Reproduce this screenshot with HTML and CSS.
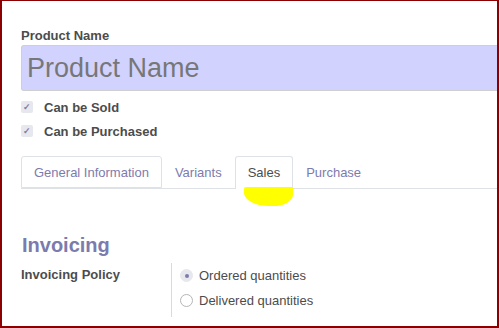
FILE: index.html
```html
<!DOCTYPE html>
<html lang="en">
<head>
    <meta charset="UTF-8">
    <title>Product - Sales</title>
    <link rel="stylesheet" href="styles.css">
</head>
<body>
    <div class="frame">
        <div class="product-form">
            <label class="field-label" for="productName">Product Name</label>
            <input class="name-input" id="productName" type="text" placeholder="Product Name">

            <div class="check-row">
                <span class="check-box">&#10003;</span>
                <span class="check-label">Can be Sold</span>
            </div>
            <div class="check-row">
                <span class="check-box">&#10003;</span>
                <span class="check-label">Can be Purchased</span>
            </div>

            <ul class="tabs">
                <li class="tab bordered">General Information</li>
                <li class="tab">Variants</li>
                <li class="tab active">Sales<span class="marker"></span></li>
                <li class="tab">Purchase</li>
            </ul>

            <h2 class="section-title">Invoicing</h2>

            <div class="field-row">
                <div class="row-label">Invoicing Policy</div>
                <div class="row-value">
                    <div class="radio-row">
                        <span class="radio checked"></span>
                        <span>Ordered quantities</span>
                    </div>
                    <div class="radio-row">
                        <span class="radio"></span>
                        <span>Delivered quantities</span>
                    </div>
                </div>
            </div>
        </div>
    </div>
</body>
</html>
```

FILE: styles.css
```css
/* Page frame */
html, body {
    margin: 0;
    height: 100%;
}

body {
    font-family: "Liberation Sans", Arial, sans-serif;
    color: #4c4c4c;
    overflow: hidden;
}

.frame {
    height: 100%;
    box-sizing: border-box;
    border: 2px solid #8b0000;
    border-top-width: 1px;
    overflow: hidden;
    background-color: #fff;
}

.product-form {
    padding: 27px 0 0 19px;
}

/* Name field */
.field-label {
    display: block;
    font-size: 13px;
    font-weight: bold;
    line-height: 15px;
    margin-bottom: 2px;
}

.name-input {
    display: block;
    box-sizing: border-box;
    width: calc(100% + 10px);
    height: 46px;
    margin: 0 0 4px 0;
    padding: 0 0 0 5px;
    border: 1px solid #cfcfcf;
    border-right: none;
    border-radius: 3px 0 0 3px;
    background-color: #d2d2fe;
    font-family: inherit;
    font-size: 27px;
    color: #777;
    outline: none;
}

.name-input::placeholder {
    color: #777;
}

/* Checkboxes */
.check-row {
    display: flex;
    align-items: center;
    height: 24px;
    gap: 11px;
}

.check-box {
    width: 12px;
    height: 12px;
    border-radius: 2px;
    background-color: #e7e7ee;
    color: #7c7bad;
    font-size: 9px;
    font-weight: bold;
    line-height: 12px;
    text-align: center;
}

.check-label {
    font-size: 13px;
    font-weight: bold;
    color: #4c4c4c;
}

/* Tabs */
.tabs {
    display: flex;
    list-style: none;
    margin: 13px -10px 0 0;
    padding: 0;
    border-bottom: 1px solid #dee2e6;
}

.tab {
    position: relative;
    padding: 0 12px;
    height: 31px;
    line-height: 31px;
    font-size: 13px;
    color: #7c7bad;
    border: 1px solid transparent;
    border-bottom: none;
    border-radius: 3px 3px 0 0;
    margin-bottom: -1px;
}

.tab.bordered {
    border-color: #dee2e6;
    border-bottom: 1px solid #dee2e6;
    height: 30px;
    margin-bottom: 0;
}

.tab.active {
    color: #4c4c4c;
    border-color: #dee2e6;
    background-color: #fff;
    height: 32px;
}

/* Yellow annotation under active tab */
.marker {
    position: absolute;
    left: 8px;
    top: 30px;
    width: 49px;
    height: 19px;
    background-color: #ffff00;
    border-radius: 2px 0 40% 50% / 2px 0 60% 70%;
}

/* Invoicing section */
.section-title {
    margin: 44px 0 0 1px;
    font-size: 20px;
    font-weight: bold;
    color: #7c7bad;
    line-height: 24px;
}

.field-row {
    display: flex;
    margin-top: 6px;
}

.row-label {
    width: 151px;
    font-size: 13px;
    font-weight: bold;
    padding-top: 4px;
    border-right: 1px solid #dadada;
    height: 54px;
    box-sizing: border-box;
}

.row-value {
    padding-left: 8px;
}

.radio-row {
    display: flex;
    align-items: center;
    gap: 6px;
    height: 25px;
    font-size: 13px;
    color: #4c4c4c;
}

.radio {
    width: 11px;
    height: 11px;
    border-radius: 50%;
    border: 1px solid #b5b5b5;
    background-color: #fff;
    box-sizing: content-box;
    position: relative;
}

.radio.checked {
    border-color: #e7e7ee;
    background-color: #e7e7ee;
}

.radio.checked::after {
    content: "";
    position: absolute;
    left: 3.5px;
    top: 3.5px;
    width: 4px;
    height: 4px;
    border-radius: 50%;
    background-color: #7c7bad;
}
```
